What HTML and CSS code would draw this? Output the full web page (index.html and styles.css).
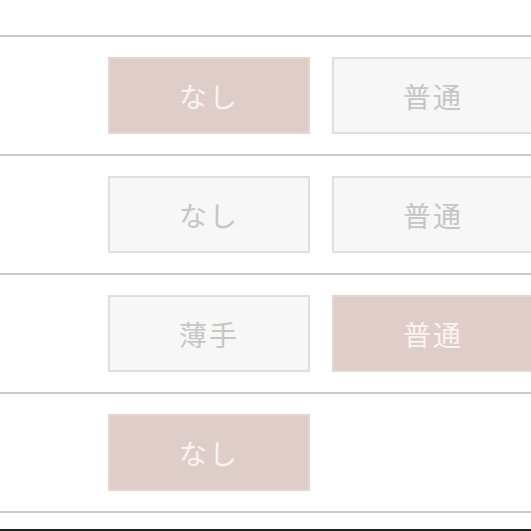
FILE: index.html
```html
<!DOCTYPE html>
<html lang="ja">
<head>
  <meta charset="UTF-8">
  <title>オプション選択</title>
  <link rel="stylesheet" href="styles.css">
</head>
<body>
  <div class="screen">
    <ul class="option-list">
      <li class="option-row">
        <button class="opt-btn selected">なし</button>
        <button class="opt-btn">普通</button>
      </li>
      <li class="option-row">
        <button class="opt-btn">なし</button>
        <button class="opt-btn">普通</button>
      </li>
      <li class="option-row">
        <button class="opt-btn">薄手</button>
        <button class="opt-btn selected">普通</button>
      </li>
      <li class="option-row">
        <button class="opt-btn selected">なし</button>
      </li>
    </ul>
  </div>
</body>
</html>
```

FILE: styles.css
```css
html, body {
  margin: 0;
  padding: 0;
  overflow: hidden;
  background: #fff;
  font-family: "Noto Sans CJK JP", "Noto Sans", sans-serif;
}

.screen {
  height: 531px;
  box-sizing: border-box;
  padding-top: 35px;
  border-bottom: 2px solid #222;
}

.option-list {
  list-style: none;
  margin: 0;
  padding: 0;
  border-bottom: 2px solid #c9c9c9;
}

.option-row {
  display: flex;
  gap: 22px;
  padding: 20px 0 20px 108px;
  border-top: 2px solid #c9c9c9;
}

.opt-btn {
  flex: 0 0 202px;
  height: 77px;
  box-sizing: border-box;
  border: 2px solid #dfdfdf;
  background: #f7f7f7;
  color: #c6c6c6;
  font-family: inherit;
  font-size: 28px;
  font-weight: 400;
  letter-spacing: 2px;
  padding: 0;
}

.opt-btn.selected {
  background: #dfcdc7;
  border-color: #e4d6d1;
  color: #fbf3f0;
}
```
